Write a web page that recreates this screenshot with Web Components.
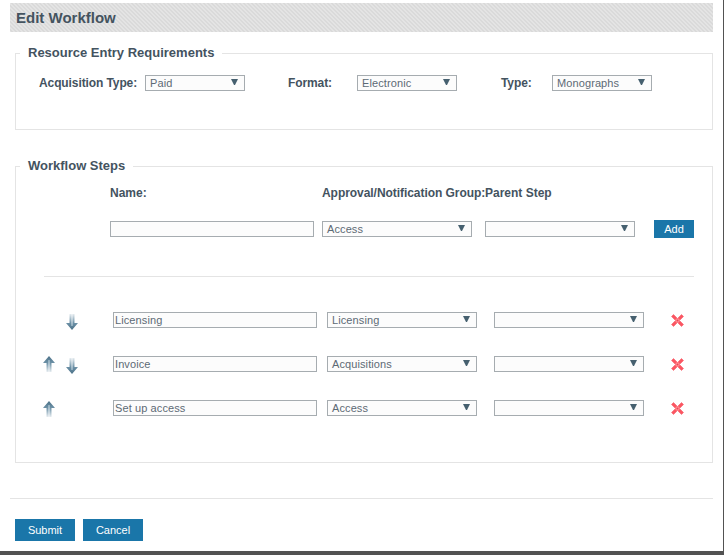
<!DOCTYPE html>
<html>
<head>
<meta charset="utf-8">
<title>Edit Workflow</title>
<style>
  html, body { margin: 0; padding: 0; background: #fff; }
  body { font-family: "Liberation Sans", Arial, sans-serif; color: #44535f; }
</style>
</head>
<body>
<wf-page>
  <wf-title>Edit Workflow</wf-title>

  <wf-panel legend="Resource Entry Requirements" class="requirements">
    <wf-filters>
      <wf-filter label="Acquisition Type:" value="Paid" width="106"></wf-filter>
      <wf-filter label="Format:" value="Electronic" width="69" start="43"></wf-filter>
      <wf-filter label="Type:" value="Monographs" width="51" start="44"></wf-filter>
    </wf-filters>
  </wf-panel>

  <wf-panel legend="Workflow Steps" class="steps">
    <wf-steps></wf-steps>
  </wf-panel>

  <wf-actions></wf-actions>
</wf-page>

<script>
  // small helper so every element has the same shadow setup
  class ShadowBase extends HTMLElement {
    constructor() {
      super();
      this.attachShadow({ mode: 'open' });
    }
  }

  class WfPage extends ShadowBase {
    connectedCallback() {
      this.shadowRoot.innerHTML = `
        <style>
          :host {
            display: block;
            box-sizing: border-box;
            width: 724px;
            height: 555px;
            padding: 3px 10px 0 10px;
            border-right: 1px solid #525252;
            border-bottom: 4px solid #525252;
            overflow: hidden;
            background: #fff;
          }
        </style>
        <slot></slot>
      `;
    }
  }

  class WfTitle extends ShadowBase {
    connectedCallback() {
      this.shadowRoot.innerHTML = `
        <style>
          :host {
            display: block;
            height: 29px;
            line-height: 29px;
            padding-left: 6px;
            font-size: 15px;
            font-weight: bold;
            color: #44535f;
            background-color: #e4e4e4;
            background-image: linear-gradient(45deg, #dadada 25%, transparent 25%, transparent 50%, #dadada 50%, #dadada 75%, transparent 75%);
            background-size: 4px 4px;
          }
        </style>
        <slot></slot>
      `;
    }
  }

  class WfPanel extends ShadowBase {
    connectedCallback() {
      this.shadowRoot.innerHTML = `
        <style>
          :host { display: block; margin-left: 5px; }
          :host(.requirements) { margin-top: 13px; height: 85px; }
          :host(.steps) { margin-top: 28px; height: 305px; }
          fieldset {
            box-sizing: border-box;
            height: 100%;
            margin: 0;
            padding: 0;
            border: 1px solid #e4e4e4;
            min-width: 0;
          }
          legend {
            margin-left: 4px;
            padding: 0 8px;
            font-size: 13px;
            line-height: 16px;
            font-weight: bold;
            color: #44535f;
          }
        </style>
        <fieldset>
          <legend>${this.getAttribute('legend')}</legend>
          <slot></slot>
        </fieldset>
      `;
    }
  }

  class WfSelect extends ShadowBase {
    connectedCallback() {
      const width = this.getAttribute('width') || 100;
      this.shadowRoot.innerHTML = `
        <style>
          :host {
            display: flex;
            align-items: center;
            justify-content: space-between;
            box-sizing: border-box;
            flex: none;
            width: ${width}px;
            height: 16px;
            padding: 0 4px;
            border: 1px solid #a6acb0;
            background: #fcfcfc;
            font-size: 11px;
            letter-spacing: 0.1px;
            color: #5c6a75;
          }
          svg { display: block; flex: none; margin-right: 2px; margin-top: -2px; }
        </style>
        <span>${this.getAttribute('value') || ''}</span>
        <svg width="7" height="6" viewBox="0 0 7 6"><path d="M0 0H7L4 6H3Z" fill="#46606f"/></svg>
      `;
    }
  }

  class WfInput extends ShadowBase {
    connectedCallback() {
      this.shadowRoot.innerHTML = `
        <style>
          :host {
            display: flex;
            align-items: center;
            box-sizing: border-box;
            flex: none;
            width: 204px;
            height: 16px;
            padding: 0 1px;
            border: 1px solid #a6acb0;
            background: #fcfcfc;
            font-size: 11px;
            letter-spacing: 0.1px;
            color: #5c6a75;
          }
        </style>
        <span>${this.getAttribute('value') || ''}</span>
      `;
    }
  }

  class WfButton extends ShadowBase {
    connectedCallback() {
      const width = this.getAttribute('width') || 60;
      const height = this.getAttribute('height') || 22;
      this.shadowRoot.innerHTML = `
        <style>
          :host {
            display: flex;
            align-items: center;
            justify-content: center;
            flex: none;
            width: ${width}px;
            height: ${height}px;
            background: #1a76a9;
            color: #fff;
            font-size: 11px;
            cursor: pointer;
          }
        </style>
        <slot></slot>
      `;
    }
  }

  class WfFilter extends ShadowBase {
    connectedCallback() {
      const start = this.getAttribute('start') || 0;
      this.shadowRoot.innerHTML = `
        <style>
          :host { display: flex; align-items: center; margin-left: ${start}px; }
          label {
            width: ${this.getAttribute('width')}px;
            font-size: 12px;
            font-weight: bold;
            letter-spacing: -0.1px;
            color: #44535f;
          }
        </style>
        <label>${this.getAttribute('label')}</label>
        <wf-select value="${this.getAttribute('value')}" width="100"></wf-select>
      `;
    }
  }

  class WfFilters extends ShadowBase {
    connectedCallback() {
      this.shadowRoot.innerHTML = `
        <style>
          :host { display: flex; padding: 14px 0 0 23px; }
        </style>
        <slot></slot>
      `;
    }
  }

  class WfArrow extends ShadowBase {
    connectedCallback() {
      const up = this.getAttribute('dir') === 'up';
      const id = up ? 'u' : 'd';
      // the shaft fades out away from the arrow head, with a paler core
      this.shadowRoot.innerHTML = `
        <style>
          :host { display: block; flex: none; width: 12px; height: 16px; margin-top: ${up ? 2 : 4}px; }
          svg { display: block; ${up ? '' : 'transform: rotate(180deg);'} }
        </style>
        <svg width="12" height="16" viewBox="0 0 12 16">
          <defs>
            <linearGradient id="${id}" x1="0" y1="0" x2="0" y2="1">
              <stop offset="0" stop-color="#4a7087"/>
              <stop offset="0.45" stop-color="#6f93a8"/>
              <stop offset="1" stop-color="#e6ecf0"/>
            </linearGradient>
            <linearGradient id="${id}c" x1="0" y1="0" x2="0" y2="1">
              <stop offset="0" stop-color="#8eacbd"/>
              <stop offset="1" stop-color="#eef2f5"/>
            </linearGradient>
          </defs>
          <path d="M6 0L12 7H8.5V16H3.5V7H0Z" fill="url(#${id})"/>
          <rect x="5" y="4" width="2" height="12" fill="url(#${id}c)"/>
        </svg>
      `;
    }
  }

  class WfRemove extends ShadowBase {
    connectedCallback() {
      this.shadowRoot.innerHTML = `
        <style>
          :host { display: block; flex: none; width: 13px; height: 13px; cursor: pointer; }
          svg { display: block; }
        </style>
        <svg width="13" height="13" viewBox="0 0 13 13">
          <path d="M0.5 2.5L2.5 0.5L6.5 4.5L10.5 0.5L12.5 2.5L8.5 6.5L12.5 10.5L10.5 12.5L6.5 8.5L2.5 12.5L0.5 10.5L4.5 6.5Z" fill="#fb5662" stroke="#f5505c" stroke-width="0.5"/>
          <circle cx="6.5" cy="6.5" r="2.2" fill="#ff8f95"/>
          <circle cx="6.5" cy="6.5" r="1" fill="#ee4753"/>
        </svg>
      `;
    }
  }

  class WfStepRow extends ShadowBase {
    connectedCallback() {
      const up = this.hasAttribute('up') ? '<wf-arrow dir="up"></wf-arrow>' : '<i></i>';
      const down = this.hasAttribute('down') ? '<wf-arrow dir="down"></wf-arrow>' : '<i></i>';
      this.shadowRoot.innerHTML = `
        <style>
          :host { display: flex; align-items: center; height: 16px; margin-bottom: 28px; }
          .arrows { display: flex; gap: 11px; width: 97px; padding-left: 27px; box-sizing: border-box; flex: none; }
          i { display: block; width: 12px; }
          wf-select { margin-left: 10px; }
          wf-select + wf-select { margin-left: 17px; }
          wf-remove { margin-left: 27px; }
        </style>
        <div class="arrows">${up}${down}</div>
        <wf-input value="${this.getAttribute('name')}"></wf-input>
        <wf-select width="150" value="${this.getAttribute('group')}"></wf-select>
        <wf-select width="150"></wf-select>
        <wf-remove></wf-remove>
      `;
    }
  }

  class WfSteps extends ShadowBase {
    connectedCallback() {
      this.shadowRoot.innerHTML = `
        <style>
          :host { display: block; padding-top: 12px; }
          .heads, .new { display: grid; margin-left: 94px; }
          .heads { grid-template-columns: 212px 163px 200px; font-size: 12px; font-weight: bold; color: #44535f; line-height: 14px; }
          .heads span { white-space: nowrap; }
          .heads span:nth-child(2) { letter-spacing: -0.05px; }
          .new { grid-template-columns: 204px 8px 150px 13px 150px 19px 40px; margin-top: 20px; align-items: center; height: 16px; }
          hr { border: 0; border-top: 1px solid #e4e4e4; margin: 40px 18px 0 28px; }
          .rows { padding-top: 35px; }
        </style>
        <div class="heads"><span>Name:</span><span>Approval/Notification Group:</span><span>Parent Step</span></div>
        <div class="new">
          <wf-input></wf-input><b></b>
          <wf-select width="150" value="Access"></wf-select><b></b>
          <wf-select width="150"></wf-select><b></b>
          <wf-button width="40" height="18">Add</wf-button>
        </div>
        <hr>
        <div class="rows">
          <wf-step-row down name="Licensing" group="Licensing"></wf-step-row>
          <wf-step-row up down name="Invoice" group="Acquisitions"></wf-step-row>
          <wf-step-row up name="Set up access" group="Access"></wf-step-row>
        </div>
      `;
    }
  }

  class WfActions extends ShadowBase {
    connectedCallback() {
      this.shadowRoot.innerHTML = `
        <style>
          :host {
            display: flex;
            gap: 8px;
            margin-top: 35px;
            padding: 20px 0 0 5px;
            border-top: 1px solid #e4e4e4;
          }
        </style>
        <wf-button>Submit</wf-button>
        <wf-button>Cancel</wf-button>
      `;
    }
  }

  customElements.define('wf-page', WfPage);
  customElements.define('wf-title', WfTitle);
  customElements.define('wf-panel', WfPanel);
  customElements.define('wf-select', WfSelect);
  customElements.define('wf-input', WfInput);
  customElements.define('wf-button', WfButton);
  customElements.define('wf-filter', WfFilter);
  customElements.define('wf-filters', WfFilters);
  customElements.define('wf-arrow', WfArrow);
  customElements.define('wf-remove', WfRemove);
  customElements.define('wf-step-row', WfStepRow);
  customElements.define('wf-steps', WfSteps);
  customElements.define('wf-actions', WfActions);
</script>
</body>
</html>
